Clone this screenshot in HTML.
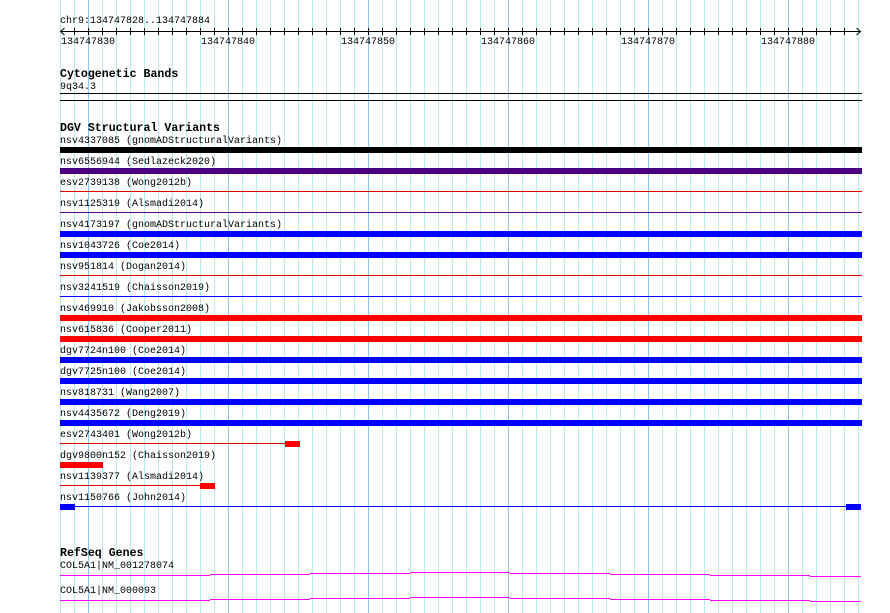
<!DOCTYPE html>
<html><head><meta charset="utf-8"><style>
html,body{margin:0;padding:0;background:#fff;width:890px;height:613px;overflow:hidden}
svg{display:block}
text{font-family:"Liberation Mono",monospace;font-size:10px;fill:#000}
.b{font-weight:bold;font-size:11.6px}
.gl{position:absolute;top:0;width:1px;height:613px;background:#b4ecf0}
.gm{background:#8cc4ec}
</style></head><body>
<svg width="890" height="613" xmlns="http://www.w3.org/2000/svg" shape-rendering="crispEdges">
<g fill="#b4ecf0">
<rect x="60" y="0" width="1" height="613"/><rect x="74" y="0" width="1" height="613"/><rect x="102" y="0" width="1" height="613"/><rect x="116" y="0" width="1" height="613"/><rect x="130" y="0" width="1" height="613"/><rect x="144" y="0" width="1" height="613"/><rect x="158" y="0" width="1" height="613"/><rect x="172" y="0" width="1" height="613"/><rect x="186" y="0" width="1" height="613"/><rect x="200" y="0" width="1" height="613"/><rect x="214" y="0" width="1" height="613"/><rect x="242" y="0" width="1" height="613"/><rect x="256" y="0" width="1" height="613"/><rect x="270" y="0" width="1" height="613"/><rect x="284" y="0" width="1" height="613"/><rect x="298" y="0" width="1" height="613"/><rect x="312" y="0" width="1" height="613"/><rect x="326" y="0" width="1" height="613"/><rect x="340" y="0" width="1" height="613"/><rect x="354" y="0" width="1" height="613"/><rect x="382" y="0" width="1" height="613"/><rect x="396" y="0" width="1" height="613"/><rect x="410" y="0" width="1" height="613"/><rect x="424" y="0" width="1" height="613"/><rect x="438" y="0" width="1" height="613"/><rect x="452" y="0" width="1" height="613"/><rect x="466" y="0" width="1" height="613"/><rect x="480" y="0" width="1" height="613"/><rect x="494" y="0" width="1" height="613"/><rect x="522" y="0" width="1" height="613"/><rect x="536" y="0" width="1" height="613"/><rect x="550" y="0" width="1" height="613"/><rect x="564" y="0" width="1" height="613"/><rect x="578" y="0" width="1" height="613"/><rect x="592" y="0" width="1" height="613"/><rect x="606" y="0" width="1" height="613"/><rect x="620" y="0" width="1" height="613"/><rect x="634" y="0" width="1" height="613"/><rect x="662" y="0" width="1" height="613"/><rect x="676" y="0" width="1" height="613"/><rect x="690" y="0" width="1" height="613"/><rect x="704" y="0" width="1" height="613"/><rect x="718" y="0" width="1" height="613"/><rect x="732" y="0" width="1" height="613"/><rect x="746" y="0" width="1" height="613"/><rect x="760" y="0" width="1" height="613"/><rect x="774" y="0" width="1" height="613"/><rect x="802" y="0" width="1" height="613"/><rect x="816" y="0" width="1" height="613"/><rect x="830" y="0" width="1" height="613"/><rect x="844" y="0" width="1" height="613"/><rect x="858" y="0" width="1" height="613"/>
</g>
<g fill="#8cc4ec">
<rect x="88" y="0" width="1" height="613"/><rect x="228" y="0" width="1" height="613"/><rect x="368" y="0" width="1" height="613"/><rect x="508" y="0" width="1" height="613"/><rect x="648" y="0" width="1" height="613"/><rect x="788" y="0" width="1" height="613"/>
</g>
<text x="60" y="23">chr9:134747828..134747884</text>
<rect x="60" y="31" width="801" height="1" fill="#000"/>
<path d="M64.5 28 L60.5 31.5 L64.5 35 M856.5 28 L860.5 31.5 L856.5 35" stroke="#000" fill="none" shape-rendering="auto"/>
<g fill="#000">
<rect x="74" y="28" width="1" height="7"/><rect x="88" y="28" width="1" height="7"/><rect x="102" y="28" width="1" height="7"/><rect x="116" y="28" width="1" height="7"/><rect x="130" y="28" width="1" height="7"/><rect x="144" y="28" width="1" height="7"/><rect x="158" y="28" width="1" height="7"/><rect x="172" y="28" width="1" height="7"/><rect x="186" y="28" width="1" height="7"/><rect x="200" y="28" width="1" height="7"/><rect x="214" y="28" width="1" height="7"/><rect x="228" y="28" width="1" height="7"/><rect x="242" y="28" width="1" height="7"/><rect x="256" y="28" width="1" height="7"/><rect x="270" y="28" width="1" height="7"/><rect x="284" y="28" width="1" height="7"/><rect x="298" y="28" width="1" height="7"/><rect x="312" y="28" width="1" height="7"/><rect x="326" y="28" width="1" height="7"/><rect x="340" y="28" width="1" height="7"/><rect x="354" y="28" width="1" height="7"/><rect x="368" y="28" width="1" height="7"/><rect x="382" y="28" width="1" height="7"/><rect x="396" y="28" width="1" height="7"/><rect x="410" y="28" width="1" height="7"/><rect x="424" y="28" width="1" height="7"/><rect x="438" y="28" width="1" height="7"/><rect x="452" y="28" width="1" height="7"/><rect x="466" y="28" width="1" height="7"/><rect x="480" y="28" width="1" height="7"/><rect x="494" y="28" width="1" height="7"/><rect x="508" y="28" width="1" height="7"/><rect x="522" y="28" width="1" height="7"/><rect x="536" y="28" width="1" height="7"/><rect x="550" y="28" width="1" height="7"/><rect x="564" y="28" width="1" height="7"/><rect x="578" y="28" width="1" height="7"/><rect x="592" y="28" width="1" height="7"/><rect x="606" y="28" width="1" height="7"/><rect x="620" y="28" width="1" height="7"/><rect x="634" y="28" width="1" height="7"/><rect x="648" y="28" width="1" height="7"/><rect x="662" y="28" width="1" height="7"/><rect x="676" y="28" width="1" height="7"/><rect x="690" y="28" width="1" height="7"/><rect x="704" y="28" width="1" height="7"/><rect x="718" y="28" width="1" height="7"/><rect x="732" y="28" width="1" height="7"/><rect x="746" y="28" width="1" height="7"/><rect x="760" y="28" width="1" height="7"/><rect x="774" y="28" width="1" height="7"/><rect x="788" y="28" width="1" height="7"/><rect x="802" y="28" width="1" height="7"/><rect x="816" y="28" width="1" height="7"/><rect x="830" y="28" width="1" height="7"/><rect x="844" y="28" width="1" height="7"/>
</g>
<text x="61" y="44">134747830</text>
<text x="201" y="44">134747840</text>
<text x="341" y="44">134747850</text>
<text x="481" y="44">134747860</text>
<text x="621" y="44">134747870</text>
<text x="761" y="44">134747880</text>

<text class="b" x="60" y="77">Cytogenetic Bands</text>
<text x="60" y="89">9q34.3</text>
<rect x="60" y="93" width="802" height="1" fill="#000"/>
<rect x="60" y="100" width="802" height="1" fill="#000"/>

<text class="b" x="60" y="131">DGV Structural Variants</text>
<text x="60" y="143">nsv4337085 (gnomADStructuralVariants)</text>
<rect x="60" y="147" width="802" height="6" fill="#000"/>
<text x="60" y="164">nsv6556944 (Sedlazeck2020)</text>
<rect x="60" y="168" width="802" height="6" fill="#4b0082"/>
<text x="60" y="185">esv2739138 (Wong2012b)</text>
<rect x="60" y="191" width="802" height="1" fill="#e00000"/>
<text x="60" y="206">nsv1125319 (Alsmadi2014)</text>
<rect x="60" y="212" width="802" height="1" fill="#5a0080"/>
<text x="60" y="227">nsv4173197 (gnomADStructuralVariants)</text>
<rect x="60" y="231" width="802" height="6" fill="#0000ff"/>
<text x="60" y="248">nsv1043726 (Coe2014)</text>
<rect x="60" y="252" width="802" height="6" fill="#0000ff"/>
<text x="60" y="269">nsv951814 (Dogan2014)</text>
<rect x="60" y="275" width="802" height="1" fill="#e00000"/>
<text x="60" y="290">nsv3241519 (Chaisson2019)</text>
<rect x="60" y="296" width="802" height="1" fill="#0000ff"/>
<text x="60" y="311">nsv469910 (Jakobsson2008)</text>
<rect x="60" y="315" width="802" height="6" fill="#ff0000"/>
<text x="60" y="332">nsv615836 (Cooper2011)</text>
<rect x="60" y="336" width="802" height="6" fill="#ff0000"/>
<text x="60" y="353">dgv7724n100 (Coe2014)</text>
<rect x="60" y="357" width="802" height="6" fill="#0000ff"/>
<text x="60" y="374">dgv7725n100 (Coe2014)</text>
<rect x="60" y="378" width="802" height="6" fill="#0000ff"/>
<text x="60" y="395">nsv818731 (Wang2007)</text>
<rect x="60" y="399" width="802" height="6" fill="#0000ff"/>
<text x="60" y="416">nsv4435672 (Deng2019)</text>
<rect x="60" y="420" width="802" height="6" fill="#0000ff"/>
<text x="60" y="437">esv2743401 (Wong2012b)</text>
<rect x="60" y="443" width="226" height="1" fill="#e00000"/>
<rect x="285" y="441" width="15" height="6" fill="#ff0000"/>
<text x="60" y="458">dgv9800n152 (Chaisson2019)</text>
<rect x="60" y="462" width="43" height="6" fill="#ff0000"/>
<text x="60" y="479">nsv1139377 (Alsmadi2014)</text>
<rect x="60" y="485" width="141" height="1" fill="#e00000"/>
<rect x="200" y="483" width="15" height="6" fill="#ff0000"/>
<text x="60" y="500">nsv1150766 (John2014)</text>
<rect x="60" y="504" width="15" height="6" fill="#0000ff"/>
<rect x="75" y="506" width="772" height="1" fill="#0000ff"/>
<rect x="846" y="504" width="15" height="6" fill="#0000ff"/>

<text class="b" x="60" y="556">RefSeq Genes</text>
<text x="60" y="568">COL5A1|NM_001278074</text>
<g fill="#ff00ff">
<rect x="60" y="575" width="50" height="1"/><rect x="110" y="575" width="100" height="1"/><rect x="210" y="574" width="100" height="1"/><rect x="310" y="573" width="100" height="1"/><rect x="410" y="572" width="100" height="1"/><rect x="510" y="573" width="100" height="1"/><rect x="610" y="574" width="100" height="1"/><rect x="710" y="575" width="100" height="1"/><rect x="810" y="576" width="51" height="1"/>
</g>
<text x="60" y="593">COL5A1|NM_000093</text>
<g fill="#ff00ff">
<rect x="60" y="600" width="50" height="1"/><rect x="110" y="600" width="100" height="1"/><rect x="210" y="599" width="100" height="1"/><rect x="310" y="598" width="100" height="1"/><rect x="410" y="597" width="100" height="1"/><rect x="510" y="598" width="100" height="1"/><rect x="610" y="599" width="100" height="1"/><rect x="710" y="600" width="100" height="1"/><rect x="810" y="601" width="51" height="1"/>
</g>
</svg>
</body></html>
